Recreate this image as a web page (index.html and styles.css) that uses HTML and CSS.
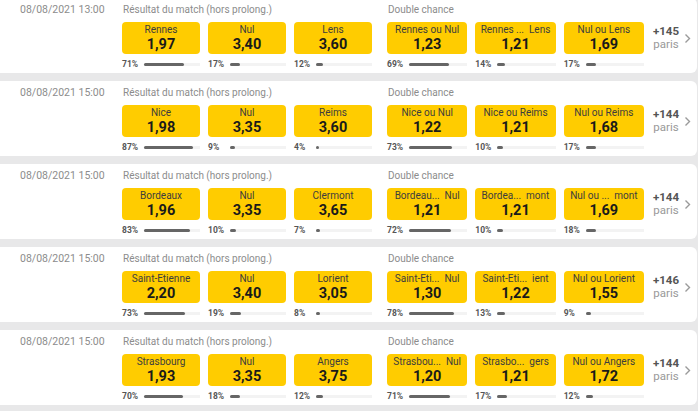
FILE: index.html
```html
<!DOCTYPE html>
<html lang="fr">
<head>
    <meta charset="UTF-8">
    <meta name="viewport" content="width=device-width, initial-scale=1.0">
    <title>Ligue 1 - Paris</title>
    <link rel="stylesheet" href="styles.css">
</head>
<body>

<div class="events">

    <!-- Rennes - Lens -->
    <div class="event">
        <div class="event-date">08/08/2021 13:00</div>
        <div class="market market-result">
            <div class="market-title">Résultat du match (hors prolong.)</div>
            <div class="outcomes">
                <div class="outcome">
                    <div class="odd"><span class="odd-name">Rennes</span><span class="odd-price">1,97</span></div>
                    <div class="share"><span class="share-pct">71%</span><div class="share-bar"><div class="share-fill" style="width:71%"></div></div></div>
                </div>
                <div class="outcome">
                    <div class="odd"><span class="odd-name">Nul</span><span class="odd-price">3,40</span></div>
                    <div class="share"><span class="share-pct">17%</span><div class="share-bar"><div class="share-fill" style="width:17%"></div></div></div>
                </div>
                <div class="outcome">
                    <div class="odd"><span class="odd-name">Lens</span><span class="odd-price">3,60</span></div>
                    <div class="share"><span class="share-pct">12%</span><div class="share-bar"><div class="share-fill" style="width:12%"></div></div></div>
                </div>
            </div>
        </div>
        <div class="market market-double">
            <div class="market-title">Double chance</div>
            <div class="outcomes">
                <div class="outcome">
                    <div class="odd"><span class="odd-name">Rennes ou Nul</span><span class="odd-price">1,23</span></div>
                    <div class="share"><span class="share-pct">69%</span><div class="share-bar"><div class="share-fill" style="width:69%"></div></div></div>
                </div>
                <div class="outcome">
                    <div class="odd"><span class="odd-name">Rennes ...&nbsp; Lens</span><span class="odd-price">1,21</span></div>
                    <div class="share"><span class="share-pct">14%</span><div class="share-bar"><div class="share-fill" style="width:14%"></div></div></div>
                </div>
                <div class="outcome">
                    <div class="odd"><span class="odd-name">Nul ou Lens</span><span class="odd-price">1,69</span></div>
                    <div class="share"><span class="share-pct">17%</span><div class="share-bar"><div class="share-fill" style="width:17%"></div></div></div>
                </div>
            </div>
        </div>
        <a class="more" href="#"><span class="more-count">+145</span><span class="more-label">paris</span></a>
        <svg class="chevron" width="7" height="11" viewBox="0 0 7 11"><path d="M1.5 1.5l4 4-4 4" fill="none" stroke="#9a9a9a" stroke-width="1.4"/></svg>
    </div>

    <!-- Nice - Reims -->
    <div class="event">
        <div class="event-date">08/08/2021 15:00</div>
        <div class="market market-result">
            <div class="market-title">Résultat du match (hors prolong.)</div>
            <div class="outcomes">
                <div class="outcome">
                    <div class="odd"><span class="odd-name">Nice</span><span class="odd-price">1,98</span></div>
                    <div class="share"><span class="share-pct">87%</span><div class="share-bar"><div class="share-fill" style="width:87%"></div></div></div>
                </div>
                <div class="outcome">
                    <div class="odd"><span class="odd-name">Nul</span><span class="odd-price">3,35</span></div>
                    <div class="share"><span class="share-pct">9%</span><div class="share-bar"><div class="share-fill" style="width:9%"></div></div></div>
                </div>
                <div class="outcome">
                    <div class="odd"><span class="odd-name">Reims</span><span class="odd-price">3,60</span></div>
                    <div class="share"><span class="share-pct">4%</span><div class="share-bar"><div class="share-fill" style="width:4%"></div></div></div>
                </div>
            </div>
        </div>
        <div class="market market-double">
            <div class="market-title">Double chance</div>
            <div class="outcomes">
                <div class="outcome">
                    <div class="odd"><span class="odd-name">Nice ou Nul</span><span class="odd-price">1,22</span></div>
                    <div class="share"><span class="share-pct">73%</span><div class="share-bar"><div class="share-fill" style="width:73%"></div></div></div>
                </div>
                <div class="outcome">
                    <div class="odd"><span class="odd-name">Nice ou Reims</span><span class="odd-price">1,21</span></div>
                    <div class="share"><span class="share-pct">10%</span><div class="share-bar"><div class="share-fill" style="width:10%"></div></div></div>
                </div>
                <div class="outcome">
                    <div class="odd"><span class="odd-name">Nul ou Reims</span><span class="odd-price">1,68</span></div>
                    <div class="share"><span class="share-pct">17%</span><div class="share-bar"><div class="share-fill" style="width:17%"></div></div></div>
                </div>
            </div>
        </div>
        <a class="more" href="#"><span class="more-count">+144</span><span class="more-label">paris</span></a>
        <svg class="chevron" width="7" height="11" viewBox="0 0 7 11"><path d="M1.5 1.5l4 4-4 4" fill="none" stroke="#9a9a9a" stroke-width="1.4"/></svg>
    </div>

    <!-- Bordeaux - Clermont -->
    <div class="event">
        <div class="event-date">08/08/2021 15:00</div>
        <div class="market market-result">
            <div class="market-title">Résultat du match (hors prolong.)</div>
            <div class="outcomes">
                <div class="outcome">
                    <div class="odd"><span class="odd-name">Bordeaux</span><span class="odd-price">1,96</span></div>
                    <div class="share"><span class="share-pct">83%</span><div class="share-bar"><div class="share-fill" style="width:83%"></div></div></div>
                </div>
                <div class="outcome">
                    <div class="odd"><span class="odd-name">Nul</span><span class="odd-price">3,35</span></div>
                    <div class="share"><span class="share-pct">10%</span><div class="share-bar"><div class="share-fill" style="width:10%"></div></div></div>
                </div>
                <div class="outcome">
                    <div class="odd"><span class="odd-name">Clermont</span><span class="odd-price">3,65</span></div>
                    <div class="share"><span class="share-pct">7%</span><div class="share-bar"><div class="share-fill" style="width:7%"></div></div></div>
                </div>
            </div>
        </div>
        <div class="market market-double">
            <div class="market-title">Double chance</div>
            <div class="outcomes">
                <div class="outcome">
                    <div class="odd"><span class="odd-name">Bordeau...&nbsp; Nul</span><span class="odd-price">1,21</span></div>
                    <div class="share"><span class="share-pct">72%</span><div class="share-bar"><div class="share-fill" style="width:72%"></div></div></div>
                </div>
                <div class="outcome">
                    <div class="odd"><span class="odd-name">Bordea...&nbsp; mont</span><span class="odd-price">1,21</span></div>
                    <div class="share"><span class="share-pct">10%</span><div class="share-bar"><div class="share-fill" style="width:10%"></div></div></div>
                </div>
                <div class="outcome">
                    <div class="odd"><span class="odd-name">Nul ou ...&nbsp; mont</span><span class="odd-price">1,69</span></div>
                    <div class="share"><span class="share-pct">18%</span><div class="share-bar"><div class="share-fill" style="width:18%"></div></div></div>
                </div>
            </div>
        </div>
        <a class="more" href="#"><span class="more-count">+144</span><span class="more-label">paris</span></a>
        <svg class="chevron" width="7" height="11" viewBox="0 0 7 11"><path d="M1.5 1.5l4 4-4 4" fill="none" stroke="#9a9a9a" stroke-width="1.4"/></svg>
    </div>

    <!-- Saint-Etienne - Lorient -->
    <div class="event">
        <div class="event-date">08/08/2021 15:00</div>
        <div class="market market-result">
            <div class="market-title">Résultat du match (hors prolong.)</div>
            <div class="outcomes">
                <div class="outcome">
                    <div class="odd"><span class="odd-name">Saint-Etienne</span><span class="odd-price">2,20</span></div>
                    <div class="share"><span class="share-pct">73%</span><div class="share-bar"><div class="share-fill" style="width:73%"></div></div></div>
                </div>
                <div class="outcome">
                    <div class="odd"><span class="odd-name">Nul</span><span class="odd-price">3,40</span></div>
                    <div class="share"><span class="share-pct">19%</span><div class="share-bar"><div class="share-fill" style="width:19%"></div></div></div>
                </div>
                <div class="outcome">
                    <div class="odd"><span class="odd-name">Lorient</span><span class="odd-price">3,05</span></div>
                    <div class="share"><span class="share-pct">8%</span><div class="share-bar"><div class="share-fill" style="width:8%"></div></div></div>
                </div>
            </div>
        </div>
        <div class="market market-double">
            <div class="market-title">Double chance</div>
            <div class="outcomes">
                <div class="outcome">
                    <div class="odd"><span class="odd-name">Saint-Eti...&nbsp; Nul</span><span class="odd-price">1,30</span></div>
                    <div class="share"><span class="share-pct">78%</span><div class="share-bar"><div class="share-fill" style="width:78%"></div></div></div>
                </div>
                <div class="outcome">
                    <div class="odd"><span class="odd-name">Saint-Eti...&nbsp; ient</span><span class="odd-price">1,22</span></div>
                    <div class="share"><span class="share-pct">13%</span><div class="share-bar"><div class="share-fill" style="width:13%"></div></div></div>
                </div>
                <div class="outcome">
                    <div class="odd"><span class="odd-name">Nul ou Lorient</span><span class="odd-price">1,55</span></div>
                    <div class="share"><span class="share-pct">9%</span><div class="share-bar"><div class="share-fill" style="width:9%"></div></div></div>
                </div>
            </div>
        </div>
        <a class="more" href="#"><span class="more-count">+146</span><span class="more-label">paris</span></a>
        <svg class="chevron" width="7" height="11" viewBox="0 0 7 11"><path d="M1.5 1.5l4 4-4 4" fill="none" stroke="#9a9a9a" stroke-width="1.4"/></svg>
    </div>

    <!-- Strasbourg - Angers -->
    <div class="event">
        <div class="event-date">08/08/2021 15:00</div>
        <div class="market market-result">
            <div class="market-title">Résultat du match (hors prolong.)</div>
            <div class="outcomes">
                <div class="outcome">
                    <div class="odd"><span class="odd-name">Strasbourg</span><span class="odd-price">1,93</span></div>
                    <div class="share"><span class="share-pct">70%</span><div class="share-bar"><div class="share-fill" style="width:70%"></div></div></div>
                </div>
                <div class="outcome">
                    <div class="odd"><span class="odd-name">Nul</span><span class="odd-price">3,35</span></div>
                    <div class="share"><span class="share-pct">18%</span><div class="share-bar"><div class="share-fill" style="width:18%"></div></div></div>
                </div>
                <div class="outcome">
                    <div class="odd"><span class="odd-name">Angers</span><span class="odd-price">3,75</span></div>
                    <div class="share"><span class="share-pct">12%</span><div class="share-bar"><div class="share-fill" style="width:12%"></div></div></div>
                </div>
            </div>
        </div>
        <div class="market market-double">
            <div class="market-title">Double chance</div>
            <div class="outcomes">
                <div class="outcome">
                    <div class="odd"><span class="odd-name">Strasbou...&nbsp; Nul</span><span class="odd-price">1,20</span></div>
                    <div class="share"><span class="share-pct">71%</span><div class="share-bar"><div class="share-fill" style="width:71%"></div></div></div>
                </div>
                <div class="outcome">
                    <div class="odd"><span class="odd-name">Strasbo...&nbsp; gers</span><span class="odd-price">1,21</span></div>
                    <div class="share"><span class="share-pct">17%</span><div class="share-bar"><div class="share-fill" style="width:17%"></div></div></div>
                </div>
                <div class="outcome">
                    <div class="odd"><span class="odd-name">Nul ou Angers</span><span class="odd-price">1,72</span></div>
                    <div class="share"><span class="share-pct">12%</span><div class="share-bar"><div class="share-fill" style="width:12%"></div></div></div>
                </div>
            </div>
        </div>
        <a class="more" href="#"><span class="more-count">+144</span><span class="more-label">paris</span></a>
        <svg class="chevron" width="7" height="11" viewBox="0 0 7 11"><path d="M1.5 1.5l4 4-4 4" fill="none" stroke="#9a9a9a" stroke-width="1.4"/></svg>
    </div>

</div>

</body>
</html>
```

FILE: styles.css
```css
body {
    font-family: Roboto, Arial, sans-serif;
    background-color: #e8e8e9;
    margin: 0;
    padding: 0;
    color: #333;
}
.events {
    display: flex;
    flex-direction: column;
    gap: 8px;
    margin-top: -2px;
    width: 697px;
}
.event {
    display: flex;
    align-items: flex-start;
    height: 75px;
    box-sizing: border-box;
    padding-top: 5px;
    background-color: #fff;
    border-radius: 0 6px 6px 0;
}
.event-date {
    flex-shrink: 0;
    width: 122px;
    padding-left: 20px;
    box-sizing: border-box;
    font-size: 10.5px;
    line-height: 14px;
    color: #8c8c8c;
    white-space: nowrap;
}
.market {
    flex-shrink: 0;
}
.market-title {
    font-size: 10px;
    line-height: 14px;
    color: #8c8c8c;
    margin-left: 1px;
    margin-bottom: 5px;
    white-space: nowrap;
}
.market-result {
    width: 250px;
}
.market-double {
    width: 257px;
    margin-left: 15px;
}
.outcomes {
    display: grid;
    grid-template-columns: repeat(3, 1fr);
    gap: 8px;
}
.odd {
    display: flex;
    flex-direction: column;
    align-items: center;
    height: 32px;
    padding-top: 2px;
    box-sizing: border-box;
    background-color: #ffcc00;
    border-radius: 4px;
    cursor: pointer;
}
.odd-name {
    font-size: 10px;
    line-height: 12px;
    color: #3d3d3d;
    white-space: nowrap;
}
.odd-price {
    font-size: 14.5px;
    line-height: 17px;
    font-weight: 700;
    color: #1a1a1a;
}
.share {
    display: flex;
    align-items: center;
    margin-top: 5px;
    height: 10px;
}
.share-pct {
    width: 22px;
    flex-shrink: 0;
    font-size: 8.5px;
    font-weight: 700;
    color: #555;
}
.share-bar {
    flex: 1;
    height: 3px;
    background-color: #f3f3f3;
}
.share-fill {
    height: 3px;
    min-width: 3px;
    background-color: #666;
    border-radius: 2px;
}
.more {
    display: flex;
    flex-direction: column;
    align-items: center;
    flex-shrink: 0;
    width: 28px;
    margin-left: 8px;
    margin-top: 22px;
    font-size: 11.5px;
    line-height: 13px;
    text-decoration: none;
}
.more-count {
    font-weight: 700;
    color: #555;
}
.more-label {
    color: #999;
}
.chevron {
    flex-shrink: 0;
    margin-left: 4px;
    margin-top: 30px;
}
```
